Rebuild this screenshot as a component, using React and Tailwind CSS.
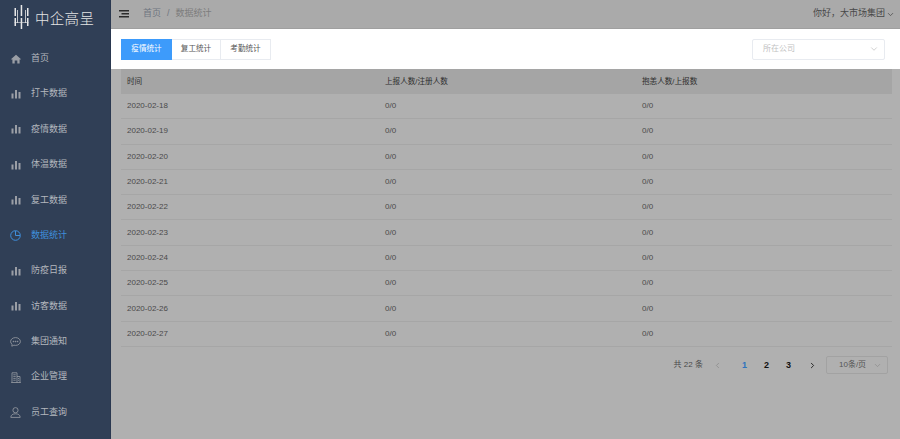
import { ChevronDown, ChevronLeft, ChevronRight } from 'lucide-react';

const CJK = "font-['Liberation_Sans','Noto_Sans_CJK_SC',sans-serif]";

const BarIcon = () => (
  <svg width="10" height="10" viewBox="0 0 10 10" fill="currentColor">
    <rect x="0.5" y="4.5" width="2" height="5" />
    <rect x="4" y="1" width="2" height="8.5" />
    <rect x="7.5" y="3" width="2" height="6.5" />
  </svg>
);

const HomeIcon = () => (
  <svg width="10" height="10" viewBox="0 0 10 10" fill="currentColor">
    <path d="M5 0.8 0.2 5v0.6h1.2V9.4h2.3V6.6h2.6v2.8h2.3V5.6h1.2V5z" />
  </svg>
);

const PieIcon = () => (
  <svg width="11" height="11" viewBox="0 0 11 11" fill="none" stroke="currentColor" strokeWidth="1">
    <circle cx="5.5" cy="5.5" r="4.8" />
    <path d="M5.5 1v4.5H10" />
  </svg>
);

const ChatIcon = () => (
  <svg width="11" height="10" viewBox="0 0 11 10" fill="none" stroke="currentColor" strokeWidth="0.8">
    <path d="M5.5 0.6C2.8 0.6 0.6 2.3 0.6 4.5c0 1.1.5 2 1.4 2.7L1.8 9.2l2.1-1c.5.1 1 .2 1.6.2 2.7 0 4.9-1.7 4.9-3.9S8.2 0.6 5.5 0.6z" />
    <circle cx="3.4" cy="4.5" r="0.4" fill="currentColor" />
    <circle cx="5.5" cy="4.5" r="0.4" fill="currentColor" />
    <circle cx="7.6" cy="4.5" r="0.4" fill="currentColor" />
  </svg>
);

const BuildingIcon = () => (
  <svg width="10" height="11" viewBox="0 0 10 11" fill="none" stroke="currentColor" strokeWidth="0.8">
    <path d="M1 10.5V0.8h5v9.7M6 4.5h3v6M0.2 10.5h9.6" />
    <path d="M2.3 2.8h2.4M2.3 4.6h2.4M2.3 6.4h2.4M2.3 8.2h2.4M7 6.5h1M7 8.3h1" />
  </svg>
);

const UserIcon = () => (
  <svg width="11" height="11" viewBox="0 0 11 11" fill="none" stroke="currentColor" strokeWidth="0.8">
    <circle cx="5.5" cy="3.2" r="2.6" />
    <path d="M0.8 10.4c0-2.4 2-3.6 4.7-3.6s4.7 1.2 4.7 3.6z" />
  </svg>
);

const MenuIcon = () => (
  <svg width="10" height="8" viewBox="0 0 10 8" fill="#2c2c2c">
    <rect x="0" y="0" width="10" height="1.5" />
    <rect x="2.5" y="3" width="7.5" height="1.5" />
    <rect x="0" y="6" width="10" height="1.5" />
  </svg>
);

const Logo = () => (
  <svg width="15" height="24" viewBox="0 0 15 24" fill="#e8e8e8" className="shrink-0">
    <rect x="0.5" y="3" width="1.5" height="8" />
    <rect x="0.5" y="13" width="1.5" height="8" />
    <rect x="3.2" y="5" width="0.8" height="13" />
    <rect x="6.7" y="0" width="1.5" height="11" />
    <rect x="6.7" y="13" width="1.5" height="11" />
    <rect x="11" y="5" width="0.8" height="13" />
    <rect x="13" y="3" width="1.5" height="8" />
    <rect x="13" y="13" width="1.5" height="8" />
    <rect x="0.5" y="17" width="14" height="0.6" />
  </svg>
);

const menu = [
  ['首页', HomeIcon],
  ['打卡数据', BarIcon],
  ['疫情数据', BarIcon],
  ['体温数据', BarIcon],
  ['复工数据', BarIcon],
  ['数据统计', PieIcon, true],
  ['防疫日报', BarIcon],
  ['访客数据', BarIcon],
  ['集团通知', ChatIcon],
  ['企业管理', BuildingIcon],
  ['员工查询', UserIcon],
];

const rows = ['2020-02-18', '2020-02-19', '2020-02-20', '2020-02-21', '2020-02-22', '2020-02-23', '2020-02-24', '2020-02-25', '2020-02-26', '2020-02-27'];

export default function App() {
  return (
    <div className={`flex h-[439px] w-[900px] overflow-hidden bg-[#b0b0b0] ${CJK}`}>
      {/* Sidebar */}
      <aside className="w-[111px] shrink-0 border-r border-[#2a3850] bg-[#303f56]">
        <div className="flex h-[34px] items-center gap-[6px] pl-[14px]">
          <Logo />
          <span className="pt-[1px] font-['Noto_Sans_CJK_SC',sans-serif] text-[14.5px] font-light tracking-[0.3px] text-[#e4e4e4]">中企高呈</span>
        </div>
        <nav className="mt-[7px] flex flex-col">
          {menu.map(([label, Icon, active]) => (
            <div key={label} className={`flex h-[35.4px] items-center text-[9px] ${active ? 'text-[#3f8fdc]' : 'text-[#9a9ea5]'}`}>
              <div className="flex w-[31px] justify-center">
                <Icon />
              </div>
              <span className={active ? 'text-[#3f8fdc]' : 'text-[#b4b8be]'}>{label}</span>
            </div>
          ))}
        </nav>
      </aside>

      <div className="flex min-w-0 flex-1 flex-col">
        {/* Top bar */}
        <header className="flex h-[29px] items-center border-b border-[#9f9f9f] bg-[#aaaaaa] pl-[8px] pr-[5px] text-[9px]">
          <MenuIcon />
          <span className="ml-[14px] text-[#6f7580]">首页</span>
          <span className="mx-[6px] text-[#6f7580]">/</span>
          <span className="text-[#7c7c7c]">数据统计</span>
          <span className="ml-auto text-[#484848]">你好，大市场集团</span>
          <ChevronDown size={9} className="ml-[1px] text-[#484848]" />
        </header>

        {/* Filters */}
        <div className="flex h-[40px] items-center justify-between bg-white pl-[10px] pr-[15px]">
          <div className="flex h-[21px] text-[7.6px] text-[#555]">
            <div className="flex w-[51px] items-center justify-center bg-[#3d9bfb] text-white">疫情统计</div>
            <div className="flex w-[49px] items-center justify-center border-y border-r border-[#e8ebf0]">复工统计</div>
            <div className="flex w-[50px] items-center justify-center border-y border-r border-[#e8ebf0]">考勤统计</div>
          </div>
          <div className="flex h-[21px] w-[133px] items-center justify-between rounded-[2px] border border-[#e8ebf0] pl-[10px] pr-[5px] text-[8px] text-[#c2c2c2]">
            <span>所在公司</span>
            <ChevronDown size={10} className="text-[#c8c8c8]" />
          </div>
        </div>

        {/* Table */}
        <div className="ml-[10px] mr-[8px] text-[8px] text-[#4a4a4a]">
          <div className="grid h-[25px] grid-cols-[256px_257px_1fr] items-center bg-[#a5a5a5] pl-[6px] text-[7.6px] text-[#2e2e2e]">
            <span>时间</span>
            <span className="pl-[2px]">上报人数/注册人数</span>
            <span className="pl-[2px]">抱恙人数/上报数</span>
          </div>
          {rows.map((date) => (
            <div key={date} className="grid h-[25.3px] grid-cols-[256px_257px_1fr] items-center border-b border-[#a6a6a6] pl-[6px]">
              <span>{date}</span>
              <span className="pl-[2px]">0/0</span>
              <span className="pl-[2px]">0/0</span>
            </div>
          ))}
        </div>

        {/* Pagination */}
        <div className="mr-[12px] mt-[7px] flex h-[23px] items-center justify-end text-[8px] text-[#4a4a4a]">
          <span>共 22 条</span>
          <ChevronLeft size={9} className="ml-[10px] text-[#8a8a8a]" />
          <span className="ml-[20px] text-[9px] font-bold text-[#2f73bd]">1</span>
          <span className="ml-[17px] text-[9px] font-bold text-[#111]">2</span>
          <span className="ml-[17px] text-[9px] font-bold text-[#111]">3</span>
          <ChevronRight size={9} strokeWidth={2.5} className="ml-[17px] text-[#222]" />
          <div className="ml-[9px] flex h-[18px] w-[62px] items-center justify-between rounded-[2px] border border-[#a2a2a2] pl-[12px] pr-[5px] text-[#555]">
            <span>10条/页</span>
            <ChevronDown size={9} className="text-[#8e8e8e]" />
          </div>
        </div>
      </div>
    </div>
  );
}
